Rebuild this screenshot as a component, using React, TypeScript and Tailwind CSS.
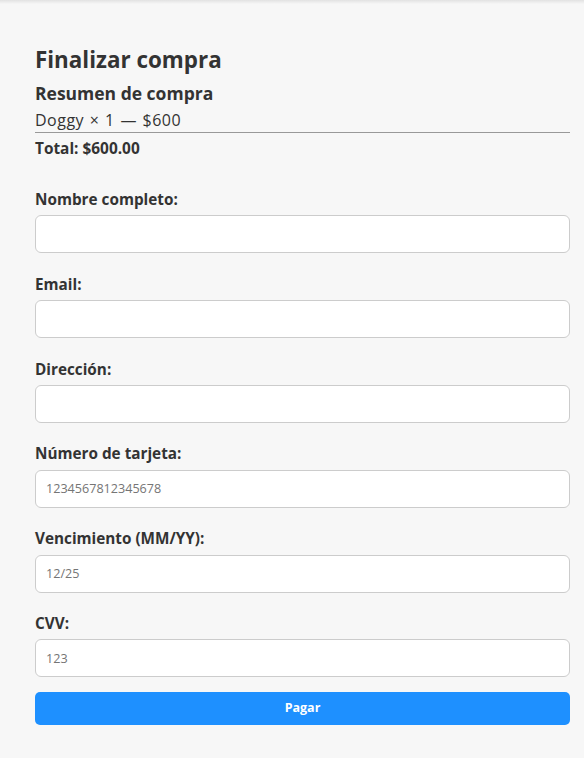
import { useState } from "react";

const fields = [
  { label: "Nombre completo:", name: "nombre", placeholder: "" },
  { label: "Email:", name: "email", placeholder: "" },
  { label: "Dirección:", name: "direccion", placeholder: "" },
  { label: "Número de tarjeta:", name: "tarjeta", placeholder: "1234567812345678" },
  { label: "Vencimiento (MM/YY):", name: "vencimiento", placeholder: "12/25" },
  { label: "CVV:", name: "cvv", placeholder: "123" },
];

export default function App() {
  const [values, setValues] = useState<Record<string, string>>({});

  return (
    <div className="min-h-[758px] bg-[#f7f7f7] text-[#333] font-['Open_Sans','Liberation_Sans',sans-serif]">
      {/* top shadow edge */}
      <div className="h-[4px] bg-gradient-to-b from-[#e2e2e2] to-[#f7f7f7]" />

      <div className="ml-[35px] w-[535px] pt-[42px]">
        <h2 className="text-[22.4px] font-bold leading-[28px]">Finalizar compra</h2>
        <h3 className="mt-[8px] text-[17.5px] font-bold leading-[22px]">Resumen de compra</h3>
        <p className="mt-[6px] text-[16px] leading-[20px] tracking-[0.5px] [word-spacing:1px]">
          Doggy × 1 — $600
        </p>
        <hr className="mt-[2px] border-t border-[#999]" />
        <p className="mt-[6px] text-[15.4px] font-bold leading-[20px]">Total: $600.00</p>

        <form className="mt-[30px] flex flex-col" onSubmit={(e) => e.preventDefault()}>
          {fields.map((f) => (
            <div key={f.name} className="mb-[20.4px] flex flex-col">
              <label htmlFor={f.name} className="mb-[6.4px] text-[15.3px] font-bold leading-[20px]">
                {f.label}
              </label>
              <input
                id={f.name}
                placeholder={f.placeholder}
                value={values[f.name] ?? ""}
                onChange={(e) => setValues({ ...values, [f.name]: e.target.value })}
                className="h-[38px] w-full rounded-[6px] border border-[#ccc] bg-white px-[10px] text-[12.6px] text-[#333] placeholder:text-[#757575] outline-none"
              />
            </div>
          ))}
          <button
            type="submit"
            className="-mt-[5.4px] h-[33px] w-full rounded-[5px] bg-[#1e90ff] text-[12.5px] font-bold text-white"
          >
            Pagar
          </button>
        </form>
      </div>
    </div>
  );
}
